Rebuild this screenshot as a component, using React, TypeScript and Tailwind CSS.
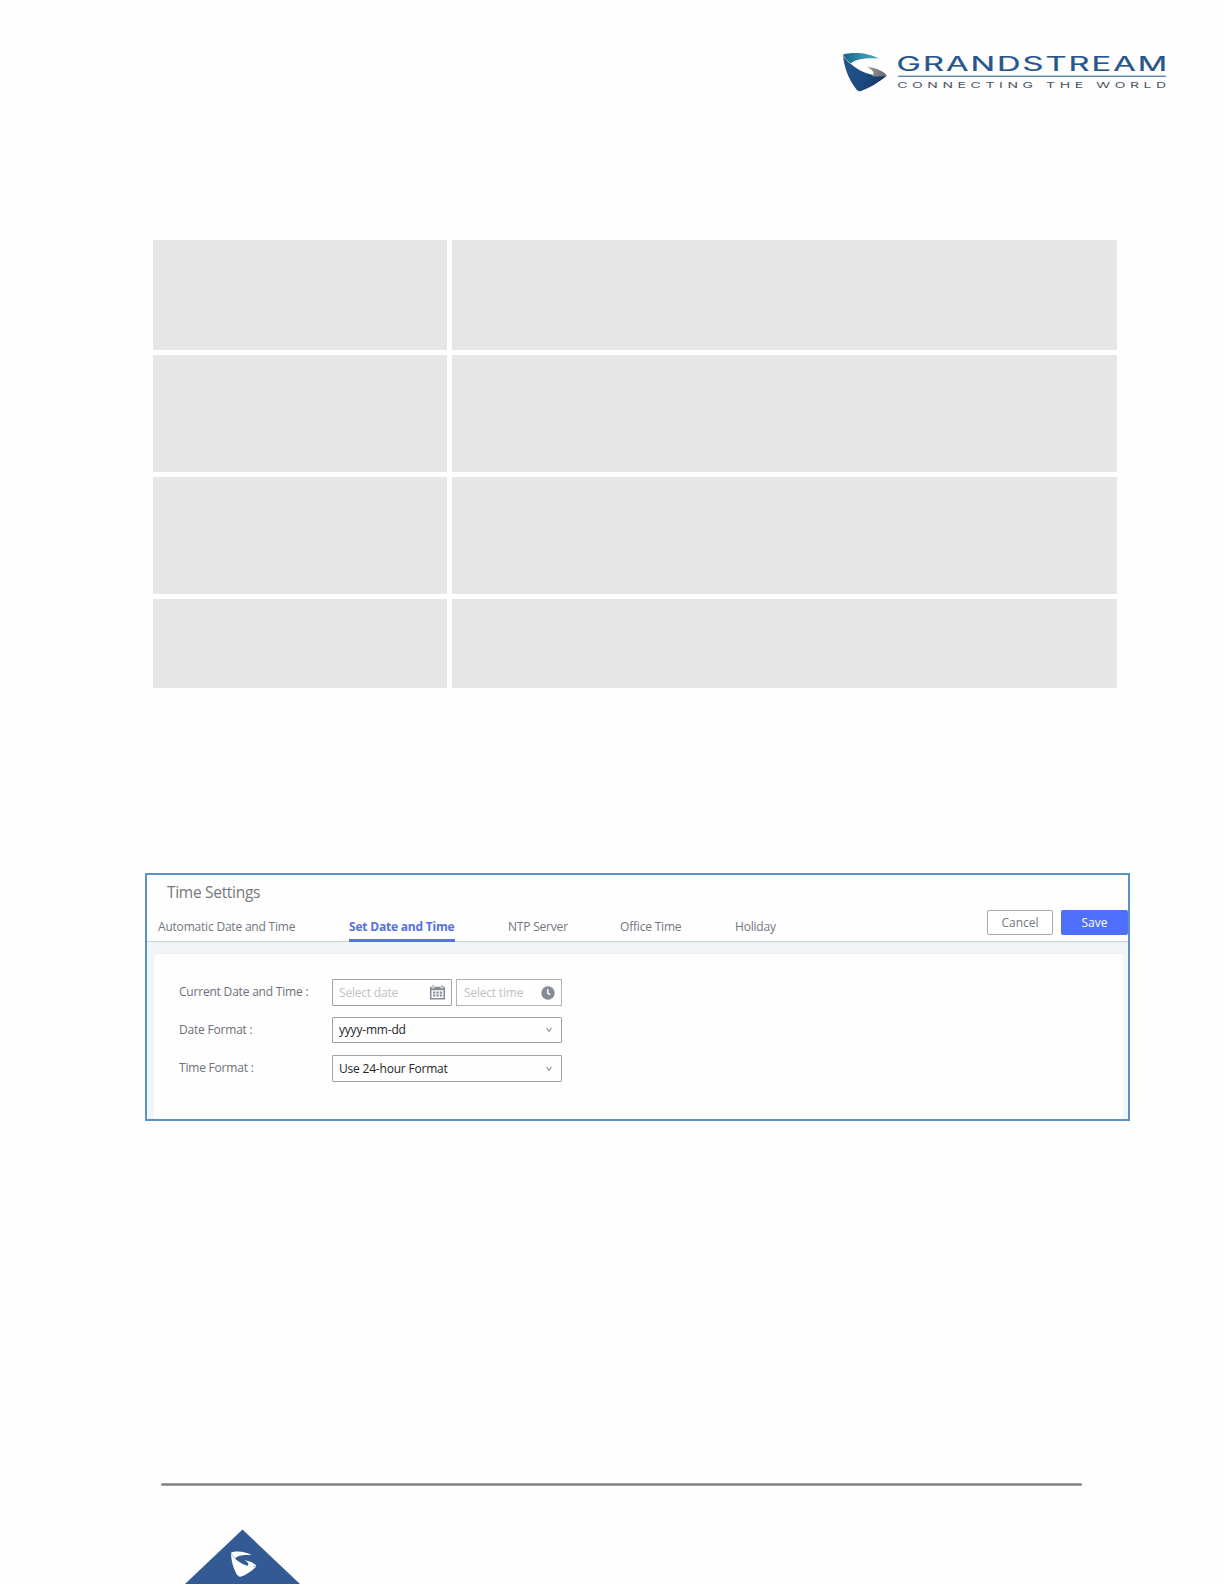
import React from 'react';

const tableRows = [
  { id: 1, height: 'h-[110px]' },
  { id: 2, height: 'h-[117px]' },
  { id: 3, height: 'h-[117px]' },
  { id: 4, height: 'h-[89px]' }
];

const tabs = [
  { label: 'Automatic Date and Time', width: 'w-[138px]' },
  { label: 'Set Date and Time', width: 'w-[106px]', active: true },
  { label: 'NTP Server', width: 'w-[59px]' },
  { label: 'Office Time', width: 'w-[62px]' },
  { label: 'Holiday', width: 'w-[41px]' }
];

const BrandLogo: React.FC = () => (
  <svg width="326" height="42" viewBox="842 51 326 42" className="block">
    <defs>
      <linearGradient id="teal" x1="0" y1="0" x2="1" y2="0">
        <stop offset="0" stopColor="#1b5f86" />
        <stop offset="0.5" stopColor="#2f8fab" />
        <stop offset="1" stopColor="#48a4b8" />
      </linearGradient>
      <linearGradient id="navy" x1="0" y1="0" x2="1" y2="0.4">
        <stop offset="0" stopColor="#25568a" />
        <stop offset="0.6" stopColor="#1c4a83" />
        <stop offset="1" stopColor="#173c68" />
      </linearGradient>
      <linearGradient id="steel" x1="0" y1="0" x2="1" y2="0">
        <stop offset="0" stopColor="#9b9da0" />
        <stop offset="1" stopColor="#636468" />
      </linearGradient>
    </defs>
    <path d="M843 54.5 C853 51.5 870 53 879 58.7 C868 57.5 856 58.5 851 63.5 C847.5 61 844.5 58 843 54.5Z" fill="url(#teal)" />
    <path d="M843 54.5 C844 58.5 848 62 854 66.5 C862 72.5 873 76.5 886.5 76 C879 82 870 88 860.5 91.2 C858.5 91.7 856.5 90 855 87.5 C848.5 78.5 843.5 66 843 54.5Z" fill="url(#navy)" />
    <path d="M867 67 C874 67.3 883 70.5 887 75.5 C881.5 77 876 76.8 871.5 76 C875.5 74 873.5 70 867 67Z" fill="url(#steel)" />
    <text
      transform="translate(896.6 70.8) scale(1.68 1)"
      fontFamily="Inter, sans-serif"
      fontSize="19.4"
      textLength="161"
      lengthAdjust="spacing"
      fill="#28568c"
      stroke="#28568c"
      strokeWidth="0.2"
    >
      GRANDSTREAM
    </text>
    <rect x="898" y="75.7" width="268" height="1.1" fill="#3c648f" />
    <text
      transform="translate(897.2 88) scale(1.75 1)"
      fontFamily="Inter, sans-serif"
      fontSize="8"
      textLength="153.7"
      lengthAdjust="spacing"
      fill="#4b5663"
    >
      CONNECTING THE WORLD
    </text>
  </svg>
);

const CalendarIcon: React.FC = () => (
  <svg width="15" height="15" viewBox="0 0 15 15" className="block" fill="#868b97">
    <path fillRule="evenodd" d="M0 1.7h1.8v1.6h2.6V1.7h6.2v1.6h2.6V1.7H15V14.5H0zM1.5 5.3v7.7h12V5.3z" />
    <rect x="2.5" y="0.2" width="1.2" height="2.3" />
    <rect x="11.3" y="0.2" width="1.2" height="2.3" />
    {[6.6, 9.5].map((y) =>
      [3, 6.4, 9.8].map((x) => <rect key={`${x}-${y}`} x={x} y={y} width="2.3" height="2" />)
    )}
  </svg>
);

const ClockIcon: React.FC = () => (
  <svg width="14" height="14" viewBox="0 0 14 14" className="block">
    <circle cx="7" cy="7" r="6.7" fill="#868b97" />
    <path d="M6.8 3v4.3l2.5 1.2" fill="none" stroke="#fff" strokeWidth="1.4" />
  </svg>
);

const ChevronIcon: React.FC = () => (
  <svg width="6" height="6" viewBox="0 0 6 6" className="block">
    <path d="M0.7 0.8 L3 4.6 L5.3 0.8" fill="none" stroke="#777b82" strokeWidth="1" />
  </svg>
);

const App: React.FC = () => {
  return (
    <div className="w-[1224px] h-[1584px] bg-[#fefefe] overflow-hidden flex flex-col font-['Open_Sans',sans-serif] text-[12px] leading-5 tracking-[-0.2px] whitespace-nowrap">
      {/* Header */}
      <header className="h-[240px] shrink-0 pt-[51px] pl-[842px] tracking-normal">
        <BrandLogo />
      </header>

      {/* Table */}
      <section className="ml-[153px] w-[964px] h-[633px] shrink-0 flex flex-col gap-[5px]">
        {tableRows.map((row) => (
          <div key={row.id} className={`${row.height} flex gap-[5px]`}>
            <div className="w-[294px] bg-[#e6e6e6]" />
            <div className="flex-1 bg-[#e6e6e6]" />
          </div>
        ))}
      </section>

      {/* Time settings */}
      <section className="ml-[145px] w-[985px] h-[248px] shrink-0 border-2 border-[#5b91c3] bg-[#fefefe] flex flex-col">
        <div className="h-[67px] shrink-0 border-b border-[#cbd3d7] flex flex-col">
          <h1 className="h-[34px] pl-5 pt-[7px] text-[15.5px] tracking-[-0.3px] text-[#75787c]">Time Settings</h1>
          <div className="h-[32px] flex">
            <nav className="flex gap-[53px] pl-[11px] pt-[6px]">
              {tabs.map((tab) => (
                <div
                  key={tab.label}
                  className={`${tab.width} h-[27px] pt-[2px] ${
                    tab.active ? 'text-[#5570e0] font-bold border-b-[3px] border-[#5473e8]' : 'text-[#73777e]'
                  }`}
                >
                  {tab.label}
                </div>
              ))}
            </nav>
            <div className="ml-auto flex gap-2 pt-px">
              <button className="w-[66px] h-[25px] rounded-xs border border-[#a5aab1] bg-white text-[#73777e] tracking-normal flex items-center justify-center">
                Cancel
              </button>
              <button className="w-[67px] h-[25px] rounded-xs bg-[#4e6ffc] text-white tracking-normal flex items-center justify-center">
                Save
              </button>
            </div>
          </div>
        </div>

        <div className="flex-1 bg-[#f1f5f8] pt-[11px] pl-[7px] pr-[5px] flex">
          <div className="flex-1 bg-[#fefefe] border-t border-[#eceff1] pl-[25px] pt-[25px] flex flex-col">
            <div className="h-[38px] flex">
              <div className="w-[153px] pt-[3px] text-[#6c7077]">Current Date and Time :</div>
              <div className="w-[120px] h-[27px] border border-[#9fa2a8] rounded-[1px] pl-1.5 pr-[6px] flex items-center justify-between text-[#bfc1c5]">
                Select date
                <CalendarIcon />
              </div>
              <div className="ml-1 w-[106px] h-[27px] border border-[#b0b3b8] pl-[7px] pr-[6px] flex items-center justify-between text-[#bfc1c5]">
                Select time
                <ClockIcon />
              </div>
            </div>
            <div className="h-[38px] flex">
              <div className="w-[153px] pt-[3px] text-[#6c7077]">Date Format :</div>
              <div className="w-[230px] h-[26px] border border-[#9fa2a8] rounded-[1px] pl-1.5 pr-[9px] flex items-center justify-between text-[#25272b]">
                yyyy-mm-dd
                <ChevronIcon />
              </div>
            </div>
            <div className="h-[38px] flex">
              <div className="w-[153px] pt-[3px] text-[#6c7077]">Time Format :</div>
              <div className="w-[230px] h-[27px] border border-[#9fa2a8] rounded-[1px] pl-1.5 pr-[9px] flex items-center justify-between text-[#25272b]">
                Use 24-hour Format
                <ChevronIcon />
              </div>
            </div>
          </div>
        </div>
      </section>

      {/* Footer */}
      <footer className="mt-auto h-[101px] shrink-0 flex flex-col justify-between">
        <div className="ml-[161px] w-[921px] h-[3px] rounded-full bg-[#808080] border-y border-[#a0a0a0]" />
        <svg width="116" height="55" viewBox="185 1529 116 55" className="ml-[185px] block">
          <path d="M242.5 1529.5 L300 1584 H185Z" fill="#345a94" />
          <path d="M231.2 1552.2 C236 1550.7 246 1551 251.5 1555.2 C245 1554.5 238 1554.8 235.3 1558.2 C233.5 1557 232 1555 231.2 1552.2Z" fill="#fff" />
          <path d="M231 1552.8 C232.5 1556.5 235 1559 239 1561.7 C244 1565.2 250 1567.2 256.3 1566.4 C252 1571 246 1575 240.5 1576.8 C238.5 1577 237 1575 236 1573 C233 1567.5 231 1560 231 1552.8Z" fill="#fff" />
          <path d="M244.5 1560.3 C249 1560.8 254.5 1563 256.3 1566 C253 1567 249.5 1567 247.5 1566 C249.5 1564.5 248 1562 244.5 1560.3Z" fill="#fff" />
        </svg>
      </footer>
    </div>
  );
};

export default App;
